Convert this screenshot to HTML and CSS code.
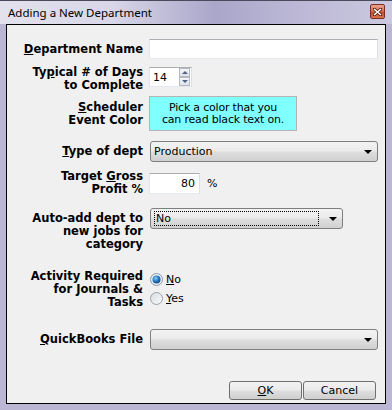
FILE: index.html
```html
<!DOCTYPE html>
<html lang="en">
<head>
    <meta charset="UTF-8">
    <title>Adding a New Department</title>
    <link rel="stylesheet" href="styles.css">
</head>
<body>
    <div class="window">
        <!-- title bar -->
        <div class="titlebar">
            <span class="title">Adding a New Department</span>
            <span class="close-btn">
                <svg width="9" height="8" viewBox="0 0 9 8">
                    <path d="M1 1 L8 7 M8 1 L1 7" stroke="#5a2010" stroke-width="3" stroke-linecap="square"/>
                    <path d="M1 1 L8 7 M8 1 L1 7" stroke="#ffffff" stroke-width="1.6"/>
                </svg>
            </span>
        </div>

        <div class="frame">
            <div class="client">
                <div class="form">
                    <div class="row row-name">
                        <div class="label"><u>D</u>epartment Name</div>
                        <div class="field"><div class="textbox"></div></div>
                    </div>

                    <div class="row row-days">
                        <div class="label">Ty<u>p</u>ical # of Days<br>to Complete</div>
                        <div class="field">
                            <div class="spin">
                                <span class="spin-value">14</span>
                                <span class="spin-buttons">
                                    <span class="spin-btn"><span class="tri-up"></span></span>
                                    <span class="spin-btn"><span class="tri-down"></span></span>
                                </span>
                            </div>
                        </div>
                    </div>

                    <div class="row row-color">
                        <div class="label"><u>S</u>cheduler<br>Event Color</div>
                        <div class="field">
                            <div class="color-box">Pick a color that you<br>can read black text on.</div>
                        </div>
                    </div>

                    <div class="row row-type">
                        <div class="label"><u>T</u>ype of dept</div>
                        <div class="field">
                            <div class="combo"><span class="combo-text">Production</span><span class="arrow"></span></div>
                        </div>
                    </div>

                    <div class="row row-profit">
                        <div class="label">Target <u>G</u>ross<br>Profit %</div>
                        <div class="field field-inline">
                            <div class="textbox profit">80</div>
                            <span class="pct">%</span>
                        </div>
                    </div>

                    <div class="row row-auto">
                        <div class="label">Auto-add dept to<br>new jobs for<br>category</div>
                        <div class="field">
                            <div class="combo combo-short"><span class="combo-text focus">No</span><span class="arrow"></span></div>
                        </div>
                    </div>

                    <div class="row row-activity">
                        <div class="label">Activity Required<br>for Journals &amp;<br>Tasks</div>
                        <div class="field">
                            <div class="radio">
                                <svg width="13" height="13" viewBox="0 0 13 13">
                                    <defs>
                                        <radialGradient id="dot" cx="0.4" cy="0.35" r="0.7">
                                            <stop offset="0" stop-color="#8fd0f5"/>
                                            <stop offset="0.5" stop-color="#2a7ec8"/>
                                            <stop offset="1" stop-color="#0f3f7a"/>
                                        </radialGradient>
                                    </defs>
                                    <circle cx="6.5" cy="6.5" r="6" fill="#eef2f6" stroke="#8a96a6"/>
                                    <circle cx="6.5" cy="6.5" r="4" fill="url(#dot)"/>
                                </svg>
                                <span><u>N</u>o</span>
                            </div>
                            <div class="radio">
                                <svg width="13" height="13" viewBox="0 0 13 13">
                                    <defs>
                                        <linearGradient id="off" x1="0" y1="0" x2="1" y2="1">
                                            <stop offset="0" stop-color="#d8dce2"/>
                                            <stop offset="1" stop-color="#fbfbfb"/>
                                        </linearGradient>
                                    </defs>
                                    <circle cx="6.5" cy="6.5" r="6" fill="url(#off)" stroke="#9aa2ac"/>
                                </svg>
                                <span><u>Y</u>es</span>
                            </div>
                        </div>
                    </div>

                    <div class="row row-qb">
                        <div class="label"><u>Q</u>uickBooks File</div>
                        <div class="field">
                            <div class="combo"><span class="combo-text"></span><span class="arrow"></span></div>
                        </div>
                    </div>
                </div>

                <div class="buttons">
                    <div class="btn"><u>O</u>K</div>
                    <div class="btn">Cancel</div>
                </div>
            </div>
        </div>
    </div>
</body>
</html>
```

FILE: styles.css
```css
body {
    margin: 0;
    font-family: 'DejaVu Sans', sans-serif;
    font-size: 11px;
    color: #000;
}

.window {
    width: 392px;
    height: 410px;
    background: #bab6d4;
    display: flex;
    flex-direction: column;
}

.titlebar {
    height: 24px;
    box-sizing: border-box;
    border-top: 1px solid #4a4a5c;
    background: linear-gradient(to right, #e2e1ec 0%, #d9d7e8 28%, #aaa6ca 55%, #bbb7d5 75%, #cbc8df 100%);
    display: flex;
    align-items: center;
    justify-content: space-between;
    padding: 0 7px 0 8px;
}

.title {
    font-family: 'Noto Sans', sans-serif;
    font-size: 11.5px;
    margin-top: -1px;
}

.close-btn {
    width: 15px;
    height: 15px;
    box-sizing: border-box;
    border: 1px solid #7a2f22;
    border-radius: 2px;
    background: linear-gradient(#eaa58f, #d56a4d 50%, #c0442a 51%, #d8784f);
    display: flex;
    align-items: center;
    justify-content: center;
    margin-top: -2px;
}

.frame {
    flex: 1;
    padding: 0 6px 6px;
    display: flex;
}

.client {
    flex: 1;
    border: 1px solid #000;
    background: #f0f0f0;
    display: flex;
    flex-direction: column;
}

.form {
    padding: 14px 7px 0 0;
}

.row {
    display: flex;
    column-gap: 6px;
}

.label {
    width: 136px;
    flex: none;
    text-align: right;
    font-weight: bold;
    font-size: 11.5px;
    line-height: 13px;
}

.field {
    flex: 1;
}

.row-name { align-items: center; }
.row-days { margin-top: 7px; align-items: flex-start; }
.row-color { margin-top: 4px; align-items: center; }
.row-type { margin-top: 10px; align-items: center; }
.row-profit { margin-top: 8px; align-items: center; }
.row-auto { margin-top: 12px; align-items: flex-start; }
.row-auto .label { padding-top: 4px; }
.row-activity { margin-top: 19px; align-items: flex-start; }
.row-qb { margin-top: 20px; align-items: center; }

.textbox {
    height: 20px;
    box-sizing: border-box;
    background: #fff;
    border: 1px solid;
    border-color: #abadb3 #dbdfe6 #e3e9ef #e2e3ea;
}

.spin {
    width: 43px;
    height: 20px;
    margin-top: 1px;
    box-sizing: border-box;
    background: #fff;
    border: 1px solid;
    border-color: #abadb3 #dbdfe6 #e3e9ef #e2e3ea;
    display: flex;
    align-items: center;
    justify-content: space-between;
    padding: 0 1px 0 3px;
}

.spin-buttons {
    display: flex;
    flex-direction: column;
}

.spin-btn {
    width: 11px;
    height: 9px;
    box-sizing: border-box;
    border: 1px solid #b3b8c2;
    background: linear-gradient(#f4f5f7, #dfe2e8);
    display: flex;
    align-items: center;
    justify-content: center;
}

.tri-up {
    border-left: 3px solid transparent;
    border-right: 3px solid transparent;
    border-bottom: 3px solid #4d6185;
}

.tri-down {
    border-left: 3px solid transparent;
    border-right: 3px solid transparent;
    border-top: 3px solid #4d6185;
}

.color-box {
    width: 148px;
    height: 35px;
    box-sizing: border-box;
    border: 1px solid #b4b4b4;
    background: #80ffff;
    display: flex;
    align-items: center;
    justify-content: center;
    text-align: center;
    line-height: 12px;
    letter-spacing: -0.2px;
}

.combo {
    height: 21px;
    margin-left: 1px;
    box-sizing: border-box;
    border: 1px solid #7f7f7f;
    border-radius: 3px;
    background: linear-gradient(#f3f3f3, #ebebeb 45%, #dddddd 55%, #d0d0d0);
    display: flex;
    align-items: center;
    padding: 0 5px 0 3px;
}

.combo-short {
    width: 193px;
}

.combo-text {
    flex: 1;
    line-height: 13px;
}

.combo-text.focus {
    border: 1px dotted #000;
    margin-right: 10px;
    padding-left: 1px;
}

.arrow {
    border-left: 4px solid transparent;
    border-right: 4px solid transparent;
    border-top: 4px solid #000;
}

.field-inline {
    display: flex;
    align-items: center;
}

.textbox.profit {
    width: 51px;
    height: 21px;
    text-align: right;
    padding-right: 4px;
    line-height: 19px;
}

.pct {
    margin-left: 7px;
}

.radio {
    height: 19px;
    display: flex;
    align-items: center;
    gap: 3px;
    padding-left: 1px;
}

.buttons {
    margin-top: 31px;
    padding-right: 9px;
    display: flex;
    justify-content: flex-end;
    gap: 1px;
}

.btn {
    width: 73px;
    height: 19px;
    box-sizing: border-box;
    border: 1px solid #707070;
    border-radius: 3px;
    background: linear-gradient(#f2f2f2, #ebebeb 45%, #dddddd 55%, #cfcfcf);
    display: flex;
    align-items: center;
    justify-content: center;
}
```
